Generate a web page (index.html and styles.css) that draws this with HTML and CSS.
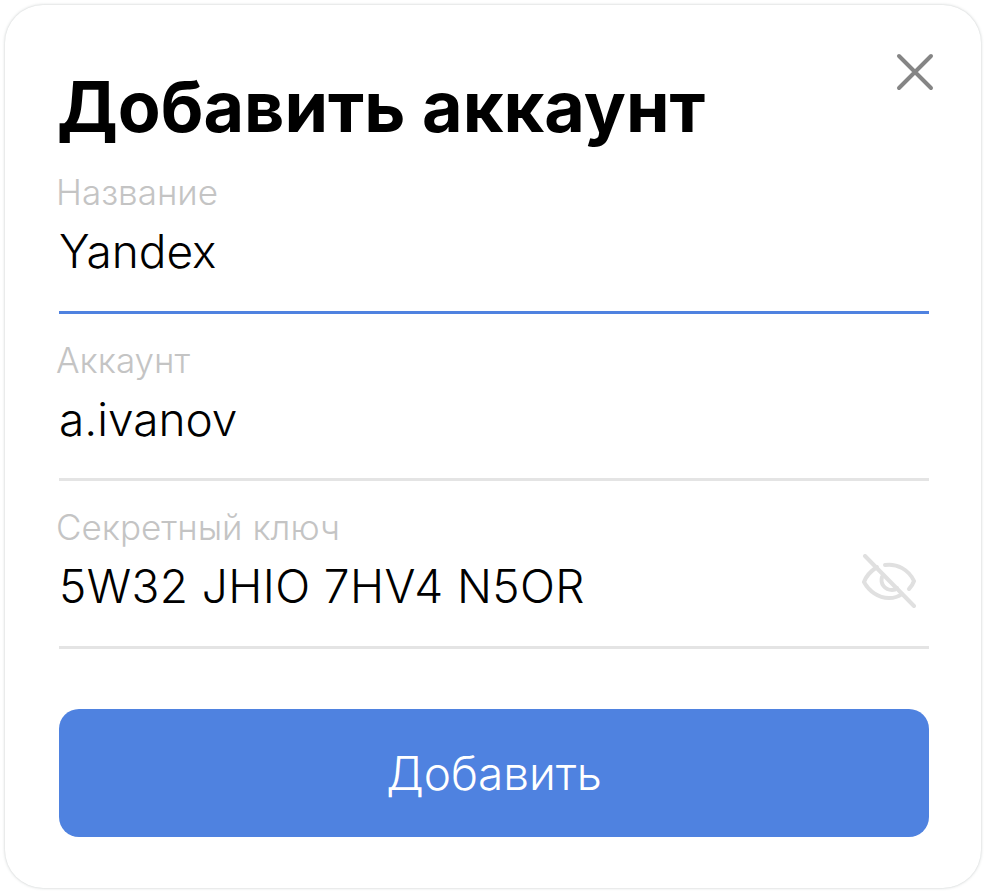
FILE: index.html
```html
<!DOCTYPE html>
<html lang="en">
<head>
    <meta charset="UTF-8">
    <title>Добавить аккаунт</title>
    <link rel="stylesheet" href="styles.css">
</head>
<body>
    <div class="dialog">
        <button class="close-btn">
            <svg width="38" height="38" viewBox="0 0 38 38"><path d="M3 3L35 35M35 3L3 35" stroke="#858585" stroke-width="4" stroke-linecap="round"/></svg>
        </button>
        <h1 class="title">Добавить аккаунт</h1>

        <div class="field active">
            <label>Название</label>
            <div class="value">Yandex</div>
        </div>
        <div class="field">
            <label>Аккаунт</label>
            <div class="value">a.ivanov</div>
        </div>
        <div class="field">
            <label>Секретный ключ</label>
            <div class="value secret">5W32 JHIO 7HV4 N5OR</div>
            <svg class="eye" width="56" height="56" viewBox="0 0 56 56" fill="none" stroke="#e0e0e0" stroke-width="4" stroke-linecap="round">
                <path d="M4 2L53 52"/>
                <path d="M16 13C10 17 5 22 3 28C8 37 17 44 28 44C33 44 37 43 41 40"/>
                <path d="M24 11C36 9 48 16 53 27C52 30 50 33 48 35"/>
                <path d="M21 23C19 30 24 36 31 36C33 36 35 35 36 34"/>
            </svg>
        </div>

        <button class="btn">Добавить</button>
    </div>
</body>
</html>
```

FILE: styles.css
```css
* {
    margin: 0;
    padding: 0;
    box-sizing: border-box;
}

body {
    font-family: Inter, sans-serif;
    background-color: #fff;
    padding: 5px 6px 6px 5px;
}

.dialog {
    position: relative;
    height: 883px;
    padding: 62px 52px 0 54px;
    background-color: #fff;
    border-radius: 38px;
    box-shadow: 0 0 3px rgba(120, 130, 130, 0.45);
}

.close-btn {
    position: absolute;
    top: 48px;
    right: 47px;
    display: flex;
    background: none;
    border: none;
}

.title {
    margin-left: -2px;
    font-size: 70px;
    line-height: 79px;
    font-weight: 700;
    color: #000;
}

.field {
    position: relative;
    height: 167.5px;
    padding-top: 24px;
    border-bottom: 3px solid #e4e4e4;
}

.field label {
    display: block;
    margin-left: -3px;
    font-size: 35px;
    line-height: 44px;
    font-weight: 300;
    color: #c4c4c4;
}

.value {
    margin-top: 7px;
    font-size: 46px;
    line-height: 60px;
    font-weight: 300;
    color: #000;
}

.value.secret {
    letter-spacing: 0.4px;
}

.field.active {
    border-bottom-color: #4f82e0;
}

.eye {
    position: absolute;
    right: 12px;
    bottom: 36px;
}

.btn {
    display: block;
    width: 100%;
    height: 128px;
    margin-top: 60px;
    background-color: #4f82e0;
    color: #fff;
    font-family: inherit;
    font-size: 46px;
    font-weight: 300;
    border: none;
    border-radius: 20px;
}
```
